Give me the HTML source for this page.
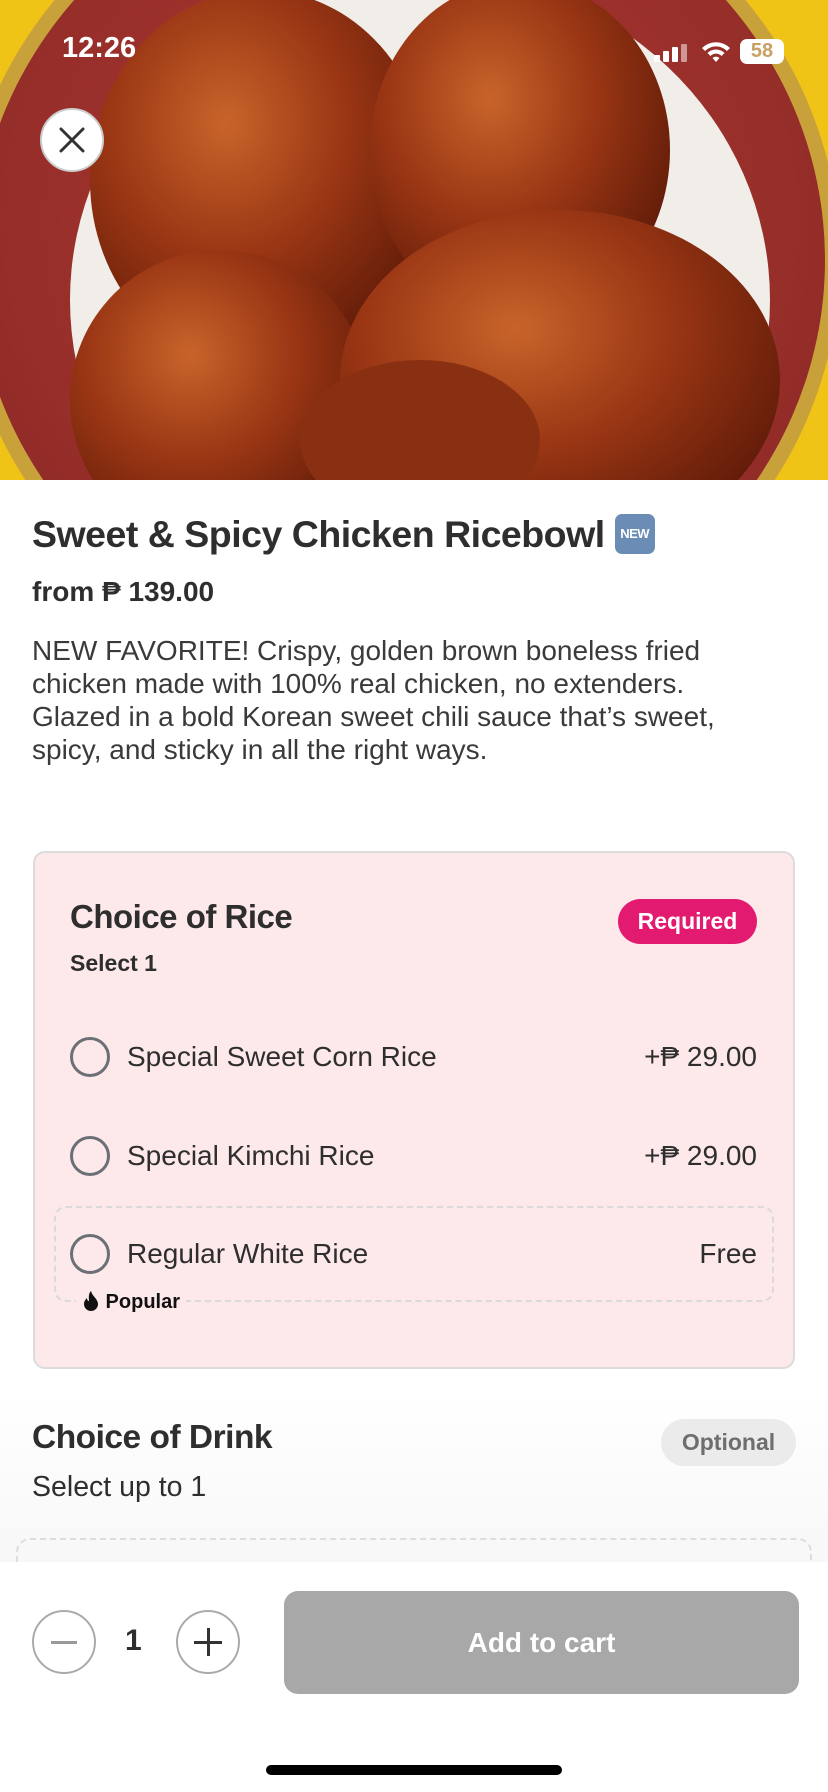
<!DOCTYPE html>
<html><head><meta charset="utf-8"><style>
*{margin:0;padding:0;box-sizing:border-box}
body{width:828px;height:1792px;background:#fff;font-family:"Liberation Sans",sans-serif;color:#2e2e2e;position:relative;overflow:hidden}
.a{position:absolute}
.hero{left:0;top:0;width:828px;height:480px;overflow:hidden;background:#f2c81e}
.t{white-space:nowrap}
</style></head><body>
<div class="a hero">
<svg width="828" height="480" viewBox="0 0 828 480">
<defs>
<radialGradient id="ck" cx="40%" cy="35%" r="70%"><stop offset="0" stop-color="#c8642a"/><stop offset=".5" stop-color="#9a3614"/><stop offset="1" stop-color="#5e1a08"/></radialGradient>
<radialGradient id="bw" cx="50%" cy="45%" r="60%"><stop offset="0" stop-color="#b03a34"/><stop offset="1" stop-color="#8e2a26"/></radialGradient>
</defs>
<rect width="828" height="480" fill="#f0c417"/>
<ellipse cx="400" cy="260" rx="440" ry="420" fill="#c9a13a"/>
<ellipse cx="400" cy="260" rx="425" ry="405" fill="url(#bw)"/>
<ellipse cx="420" cy="300" rx="350" ry="330" fill="#f1ede8"/>
<ellipse cx="260" cy="180" rx="170" ry="190" fill="url(#ck)"/>
<ellipse cx="520" cy="150" rx="150" ry="170" fill="url(#ck)"/>
<ellipse cx="220" cy="400" rx="150" ry="150" fill="url(#ck)"/>
<ellipse cx="560" cy="380" rx="220" ry="170" fill="url(#ck)"/>
<ellipse cx="420" cy="440" rx="120" ry="80" fill="#8a3012"/>
</svg>
</div>
<div class="a t" style="left:62px;top:32px;color:#fff;font-size:29px;font-weight:600">12:26</div>
<div class="a" style="left:654px;top:44px;width:40px;height:18px">
<div class="a" style="left:0;top:11px;width:6px;height:7px;background:#fff;border-radius:1px"></div>
<div class="a" style="left:9px;top:7px;width:6px;height:11px;background:#fff;border-radius:1px"></div>
<div class="a" style="left:18px;top:3px;width:6px;height:15px;background:#fff;border-radius:1px"></div>
<div class="a" style="left:27px;top:0;width:6px;height:18px;background:rgba(255,255,255,.5);border-radius:1px"></div>
</div>
<svg class="a" style="left:700px;top:40px" width="32" height="24" viewBox="0 0 32 24"><path d="M2 8a20 20 0 0 1 28 0l-3 3a15.5 15.5 0 0 0-22 0zM7.5 13a12 12 0 0 1 17 0l-3 3a7.5 7.5 0 0 0-11 0zM12.5 18a5 5 0 0 1 7 0L16 22z" fill="#fff"/></svg>
<div class="a" style="left:740px;top:39px;width:44px;height:25px;background:#fff;border-radius:7px;color:#c9a063;font-size:20px;font-weight:bold;text-align:center;line-height:25px">58</div>
<div class="a" style="left:40px;top:108px;width:64px;height:64px;border-radius:50%;background:#fff;border:2px solid #ccc">
<svg width="60" height="60" viewBox="0 0 60 60"><path d="M19 19L41 41M41 19L19 41" stroke="#333" stroke-width="3" stroke-linecap="round"/></svg></div>

<div class="a t" style="left:32px;top:512px;font-size:37.5px;font-weight:bold;letter-spacing:-0.5px;line-height:44px">Sweet &amp; Spicy Chicken Ricebowl <span style="display:inline-block;width:40px;height:40px;background:#6b8db5;border-radius:7px;color:#fff;font-size:13px;text-align:center;line-height:40px;vertical-align:top;margin-top:2px">NEW</span></div>
<div class="a t" style="left:32px;top:576px;font-size:28px;font-weight:bold">from ₱ 139.00</div>
<div class="a" style="left:32px;top:634px;width:790px;font-size:28px;line-height:33px;color:#3a3a3a;white-space:nowrap">NEW FAVORITE! Crispy, golden brown boneless fried<br>chicken made with 100% real chicken, no extenders.<br>Glazed in a bold Korean sweet chili sauce that’s sweet,<br>spicy, and sticky in all the right ways.</div>

<div class="a" style="left:33px;top:851px;width:762px;height:518px;background:#fde8ea;border:2px solid #dcdcdc;border-radius:12px"></div>
<div class="a t" style="left:70px;top:898px;font-size:33px;font-weight:bold;letter-spacing:-0.5px">Choice of Rice</div>
<div class="a t" style="left:618px;top:899px;width:139px;height:45px;background:#e21b70;border-radius:23px;color:#fff;font-size:23px;font-weight:bold;text-align:center;line-height:45px">Required</div>
<div class="a t" style="left:70px;top:950px;font-size:23px;font-weight:bold">Select 1</div>

<div class="a" style="left:70px;top:1037px;width:40px;height:40px;border:3px solid #6b6f76;border-radius:50%"></div>
<div class="a t" style="left:127px;top:1041px;font-size:28px">Special Sweet Corn Rice</div>
<div class="a t" style="right:71px;top:1041px;font-size:28px">+₱ 29.00</div>
<div class="a" style="left:70px;top:1136px;width:40px;height:40px;border:3px solid #6b6f76;border-radius:50%"></div>
<div class="a t" style="left:127px;top:1140px;font-size:28px">Special Kimchi Rice</div>
<div class="a t" style="right:71px;top:1140px;font-size:28px">+₱ 29.00</div>
<div class="a" style="left:54px;top:1206px;width:720px;height:96px;border:2px dashed #dadada;border-radius:12px"></div>
<div class="a" style="left:70px;top:1234px;width:40px;height:40px;border:3px solid #6b6f76;border-radius:50%"></div>
<div class="a t" style="left:127px;top:1238px;font-size:28px">Regular White Rice</div>
<div class="a t" style="right:71px;top:1238px;font-size:28px">Free</div>
<div class="a t" style="left:76px;top:1290px;padding:0 6px;background:#fde8ea;font-size:20px;font-weight:bold;color:#111"><svg width="18" height="22" viewBox="0 0 18 22" style="vertical-align:-4px"><path d="M9 1C10 6 16 9 16 14a7 7 0 0 1-14 0c0-3 2-5 3-6 0 2 1 3 2 3C7 8 6 4 9 1z" fill="#111"/></svg> Popular</div>

<div class="a" style="left:0;top:1390px;width:828px;height:180px;background:linear-gradient(#fff,#f7f7f7)"></div>
<div class="a t" style="left:32px;top:1419px;font-size:33.5px;font-weight:bold;letter-spacing:-0.5px">Choice of Drink</div>
<div class="a t" style="left:661px;top:1419px;width:135px;height:47px;background:#ebebeb;border-radius:24px;color:#6e6e6e;font-size:23px;font-weight:bold;text-align:center;line-height:47px">Optional</div>
<div class="a t" style="left:32px;top:1471px;font-size:28.5px">Select up to 1</div>
<div class="a" style="left:16px;top:1538px;width:796px;height:60px;border:2px dashed #ddd;border-radius:14px"></div>

<div class="a" style="left:0;top:1562px;width:828px;height:230px;background:#fff"></div>
<div class="a" style="left:32px;top:1610px;width:64px;height:64px;border:2px solid #aaa;border-radius:50%"><div class="a" style="left:17px;top:29px;width:26px;height:3px;background:#999"></div></div>
<div class="a t" style="left:125px;top:1624px;font-size:30px;font-weight:bold">1</div>
<div class="a" style="left:176px;top:1610px;width:64px;height:64px;border:2px solid #aaa;border-radius:50%"><div class="a" style="left:16px;top:29px;width:28px;height:3px;background:#333"></div><div class="a" style="left:29px;top:16px;width:3px;height:28px;background:#333"></div></div>
<div class="a t" style="left:284px;top:1591px;width:515px;height:103px;background:#a8a8a8;border-radius:14px;color:#fff;font-size:28px;font-weight:bold;text-align:center;line-height:103px">Add to cart</div>
<div class="a" style="left:266px;top:1765px;width:296px;height:10px;background:#000;border-radius:5px"></div>
</body></html>
